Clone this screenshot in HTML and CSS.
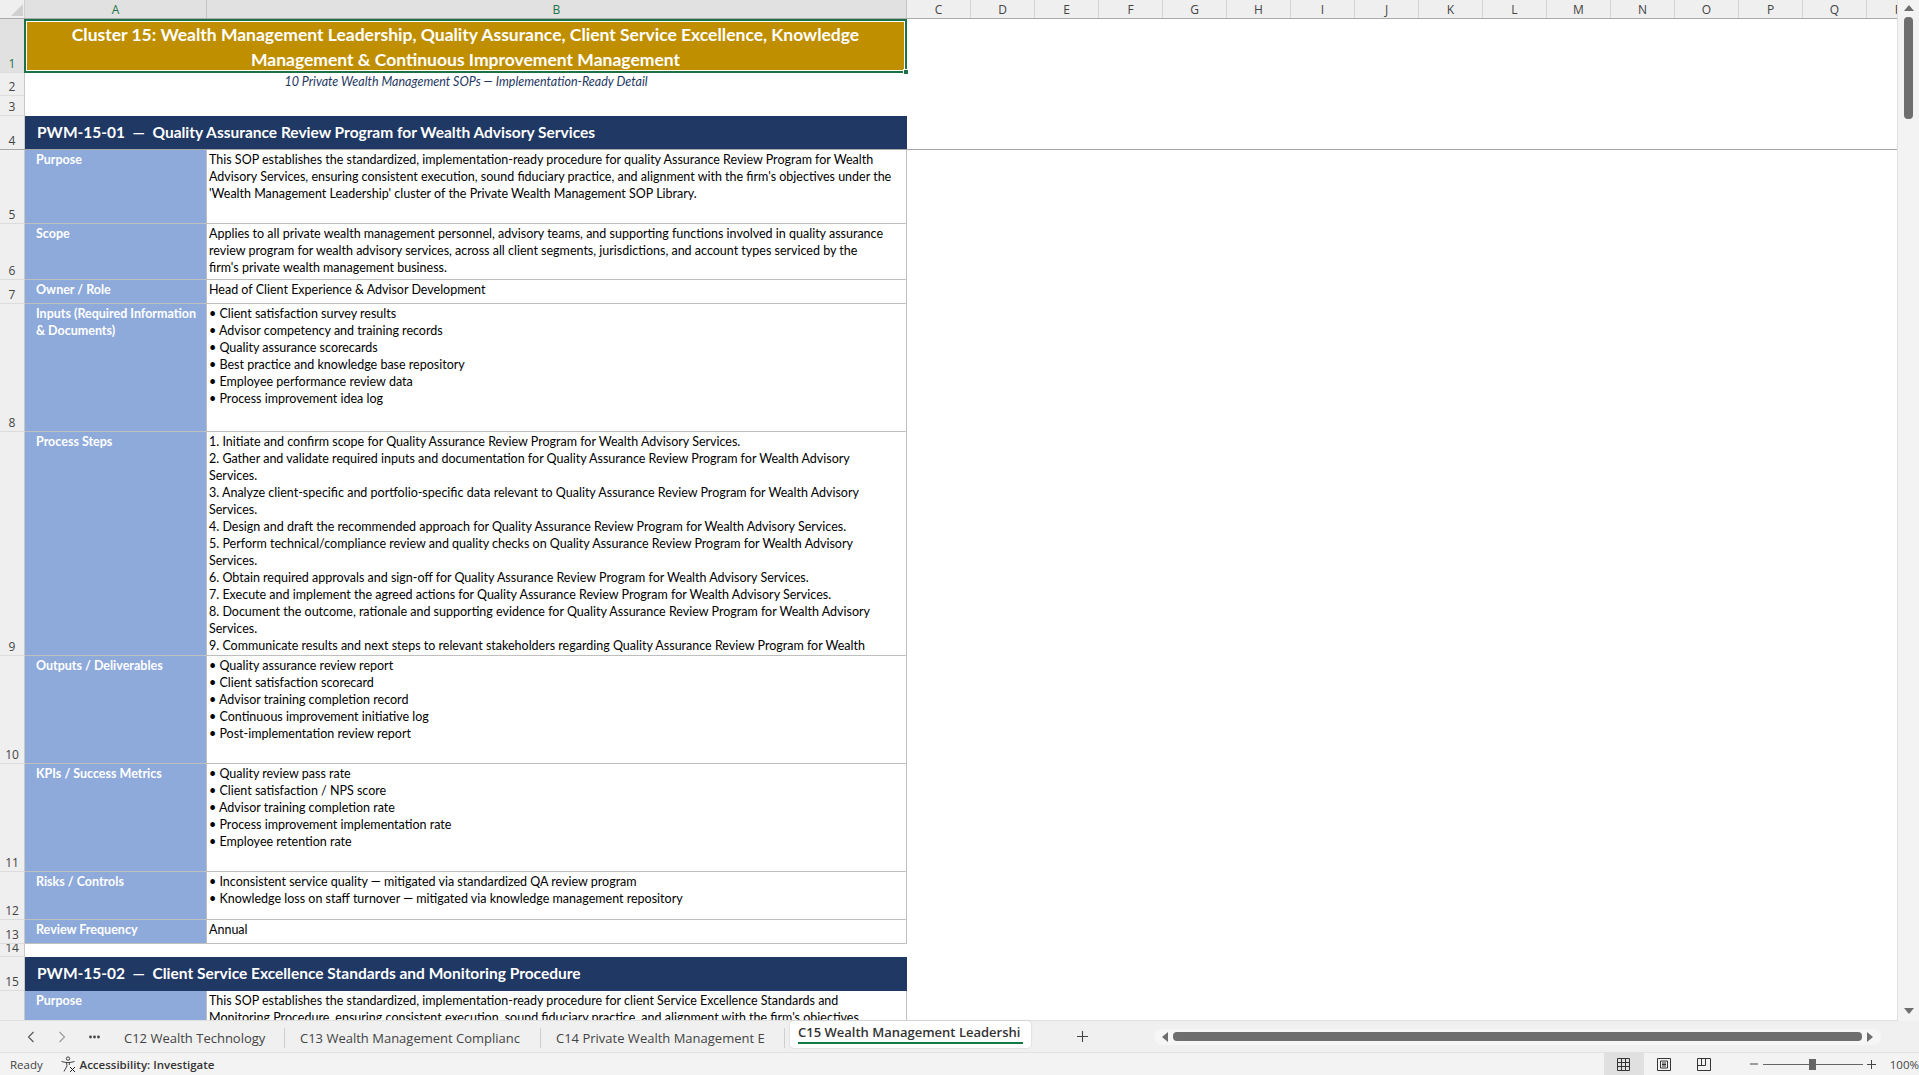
FILE: index.html
```html
<!DOCTYPE html>
<html lang="en">
<head>
  <meta charset="UTF-8">
  <title>C15 Wealth Management Leadership</title>
  <link rel="stylesheet" href="styles.css">
</head>
<body>
  <div class="app">
    <div class="main">
      <div class="sheet">
        <div class="colhead">
          <div class="corner"><svg width="14" height="14" viewBox="0 0 14 14"><polygon points="13,1 13,13 1,13" fill="#d0d0d0"/></svg></div>
          <div class="col col-a sel">A</div>
          <div class="col col-b sel">B</div>
          <div class="col">C</div><div class="col">D</div><div class="col">E</div><div class="col">F</div>
          <div class="col">G</div><div class="col">H</div><div class="col">I</div><div class="col">J</div>
          <div class="col">K</div><div class="col">L</div><div class="col">M</div><div class="col">N</div>
          <div class="col">O</div><div class="col">P</div><div class="col">Q</div><div class="col">R</div>
        </div>

        <div class="row r1">
          <div class="rh sel">1</div>
          <div class="title">Cluster 15: Wealth Management Leadership, Quality Assurance, Client Service Excellence, Knowledge<br>Management &amp; Continuous Improvement Management<span class="handle"></span></div>
        </div>
        <div class="row r2">
          <div class="rh">2</div>
          <div class="subtitle">10 Private Wealth Management SOPs — Implementation-Ready Detail</div>
        </div>
        <div class="row r3"><div class="rh">3</div></div>
        <div class="row r4 freeze">
          <div class="rh">4</div>
          <div class="section">PWM-15-01&nbsp; —&nbsp; Quality Assurance Review Program for Wealth Advisory Services</div>
        </div>

        <div class="row r5">
          <div class="rh">5</div>
          <div class="label">Purpose</div>
          <div class="text">This SOP establishes the standardized, implementation-ready procedure for quality Assurance Review Program for Wealth<br>Advisory Services, ensuring consistent execution, sound fiduciary practice, and alignment with the firm's objectives under the<br>'Wealth Management Leadership' cluster of the Private Wealth Management SOP Library.</div>
        </div>
        <div class="row r6">
          <div class="rh">6</div>
          <div class="label">Scope</div>
          <div class="text">Applies to all private wealth management personnel, advisory teams, and supporting functions involved in quality assurance<br>review program for wealth advisory services, across all client segments, jurisdictions, and account types serviced by the<br>firm's private wealth management business.</div>
        </div>
        <div class="row r7">
          <div class="rh">7</div>
          <div class="label">Owner / Role</div>
          <div class="text">Head of Client Experience &amp; Advisor Development</div>
        </div>
        <div class="row r8">
          <div class="rh">8</div>
          <div class="label">Inputs (Required Information<br>&amp; Documents)</div>
          <div class="text">• Client satisfaction survey results<br>• Advisor competency and training records<br>• Quality assurance scorecards<br>• Best practice and knowledge base repository<br>• Employee performance review data<br>• Process improvement idea log</div>
        </div>
        <div class="row r9">
          <div class="rh">9</div>
          <div class="label">Process Steps</div>
          <div class="text">1. Initiate and confirm scope for Quality Assurance Review Program for Wealth Advisory Services.<br>2. Gather and validate required inputs and documentation for Quality Assurance Review Program for Wealth Advisory<br>Services.<br>3. Analyze client-specific and portfolio-specific data relevant to Quality Assurance Review Program for Wealth Advisory<br>Services.<br>4. Design and draft the recommended approach for Quality Assurance Review Program for Wealth Advisory Services.<br>5. Perform technical/compliance review and quality checks on Quality Assurance Review Program for Wealth Advisory<br>Services.<br>6. Obtain required approvals and sign-off for Quality Assurance Review Program for Wealth Advisory Services.<br>7. Execute and implement the agreed actions for Quality Assurance Review Program for Wealth Advisory Services.<br>8. Document the outcome, rationale and supporting evidence for Quality Assurance Review Program for Wealth Advisory<br>Services.<br>9. Communicate results and next steps to relevant stakeholders regarding Quality Assurance Review Program for Wealth</div>
        </div>
        <div class="row r10">
          <div class="rh">10</div>
          <div class="label">Outputs / Deliverables</div>
          <div class="text">• Quality assurance review report<br>• Client satisfaction scorecard<br>• Advisor training completion record<br>• Continuous improvement initiative log<br>• Post-implementation review report</div>
        </div>
        <div class="row r11">
          <div class="rh">11</div>
          <div class="label">KPIs / Success Metrics</div>
          <div class="text">• Quality review pass rate<br>• Client satisfaction / NPS score<br>• Advisor training completion rate<br>• Process improvement implementation rate<br>• Employee retention rate</div>
        </div>
        <div class="row r12">
          <div class="rh">12</div>
          <div class="label">Risks / Controls</div>
          <div class="text">• Inconsistent service quality — mitigated via standardized QA review program<br>• Knowledge loss on staff turnover — mitigated via knowledge management repository</div>
        </div>
        <div class="row r13">
          <div class="rh">13</div>
          <div class="label">Review Frequency</div>
          <div class="text">Annual</div>
        </div>
        <div class="row r14"><div class="rh">14</div></div>
        <div class="row r15">
          <div class="rh">15</div>
          <div class="section">PWM-15-02&nbsp; —&nbsp; Client Service Excellence Standards and Monitoring Procedure</div>
        </div>
        <div class="row r16">
          <div class="rh"></div>
          <div class="label">Purpose</div>
          <div class="text">This SOP establishes the standardized, implementation-ready procedure for client Service Excellence Standards and<br>Monitoring Procedure, ensuring consistent execution, sound fiduciary practice, and alignment with the firm's objectives</div>
        </div>
      </div>

      <div class="vscroll">
        <svg class="varrow" width="10" height="6" viewBox="0 0 10 6"><polygon points="5,0 10,6 0,6" fill="#6e6e6e"/></svg>
        <div class="vthumb"></div>
        <svg class="varrow down" width="10" height="6" viewBox="0 0 10 6"><polygon points="0,0 10,0 5,6" fill="#6e6e6e"/></svg>
      </div>
    </div>

    <div class="tabbar">
      <div class="tabnav">
        <svg width="8" height="12" viewBox="0 0 8 12"><path d="M6.5 1 1.5 6l5 5" fill="none" stroke="#555" stroke-width="1.1"/></svg>
        <svg width="8" height="12" viewBox="0 0 8 12"><path d="M1.5 1l5 5-5 5" fill="none" stroke="#999" stroke-width="1.1"/></svg>
        <svg width="11" height="4" viewBox="0 0 11 4"><circle cx="1.5" cy="2" r="1.4" fill="#444"/><circle cx="5.5" cy="2" r="1.4" fill="#444"/><circle cx="9.5" cy="2" r="1.4" fill="#444"/></svg>
      </div>
      <div class="tab t12">C12 Wealth Technology</div>
      <div class="tab t13">C13 Wealth Management Complianc</div>
      <div class="tab t14">C14 Private Wealth Management E</div>
      <div class="tab active"><span>C15 Wealth Management Leadershi</span></div>
      <div class="addtab">
        <svg width="13" height="13" viewBox="0 0 13 13"><path d="M6.5 1v11M1 6.5h11" stroke="#444" stroke-width="1.1"/></svg>
      </div>
      <div class="tabdots">
        <svg width="3" height="12" viewBox="0 0 3 12"><circle cx="1.5" cy="1.5" r="1.2" fill="#444"/><circle cx="1.5" cy="6" r="1.2" fill="#444"/><circle cx="1.5" cy="10.5" r="1.2" fill="#444"/></svg>
      </div>
      <div class="hscroll">
        <svg width="6" height="10" viewBox="0 0 6 10"><polygon points="0,5 6,0 6,10" fill="#6e6e6e"/></svg>
        <div class="hthumb"></div>
        <svg width="6" height="10" viewBox="0 0 6 10"><polygon points="0,0 6,5 0,10" fill="#6e6e6e"/></svg>
      </div>
    </div>

    <div class="status">
      <div class="ready">Ready</div>
      <div class="access">
        <svg width="17" height="17" viewBox="0 0 17 17" fill="none" stroke="#444" stroke-width="1">
          <circle cx="8" cy="2.6" r="1.7"/>
          <path d="M1.5 5.5 6 6.5h4l4.5-1M6.5 6.5 7 10l-3 5.5M9.5 6.5 9.3 9"/>
          <path d="M10 11l5 5M15 11l-5 5" stroke="#222"/>
        </svg>
        <span>Accessibility: Investigate</span>
      </div>
      <div class="views">
        <div class="view on">
          <svg width="13" height="13" viewBox="0 0 13 13" fill="none" stroke="#333"><path d="M.5.5h12v12H.5zM.5 4.5h12M.5 8.5h12M4.5.5v12M8.5.5v12"/></svg>
        </div>
        <div class="view">
          <svg width="14" height="13" viewBox="0 0 14 13" fill="none" stroke="#333"><path d="M.5.5h13v12H.5zM3.5 3h7v7h-7zM5 5h4M5 6.500h4M5 8h4"/></svg>
        </div>
        <div class="view">
          <svg width="14" height="13" viewBox="0 0 14 13" fill="none" stroke="#333"><path d="M.5.500h13v12H.5zM.5 7.500h8v-7M4.500 .5v7"/></svg>
        </div>
      </div>
      <div class="zoom">
        <svg width="8" height="2" viewBox="0 0 8 2"><path d="M0 1h8" stroke="#444"/></svg>
        <div class="slider"><span class="knob"></span></div>
        <svg width="9" height="9" viewBox="0 0 9 9"><path d="M0 4.500h9M4.500 0v9" stroke="#444"/></svg>
        <div class="pct">100%</div>
      </div>
    </div>
  </div>
</body>
</html>
```
FILE: styles.css
```css
* {
  box-sizing: border-box;
}
body {
  margin: 0;
  overflow: hidden;
  background: #fff;
  font-family: Lato, "Open Sans", sans-serif;
  color: #000;
}
.app {
  width: 1919px;
  height: 1075px;
  display: flex;
  flex-direction: column;
}
.main {
  height: 1021px;
  display: flex;
  overflow: hidden;
}
.sheet {
  width: 1898px;
  overflow: hidden;
  border-right: 1px solid #e0e0e0;
  border-bottom: 1px solid #e0e0e0;
}

/* column letters */
.colhead {
  display: flex;
  height: 19px;
  background: #efefef;
  border-bottom: 1px solid #ababab;
  overflow: hidden;
}
.corner {
  flex: none;
  width: 25px;
  padding: 3px 0 0 10px;
  background: #efefef;
  border-right: 1px solid #d0d0d0;
}
.corner svg {
  display: block;
}
.col {
  flex: none;
  width: 64px;
  font-family: "Open Sans", sans-serif;
  font-size: 12px;
  line-height: 20px;
  text-align: center;
  color: #444;
  border-right: 1px solid #d4d4d4;
}
.col-a {
  width: 182px;
}
.col-b {
  width: 700px;
}
.col.sel {
  background: #e1e1e1;
  color: #217346;
  border-right-color: #c4c4c4;
}

/* rows */
.row {
  display: flex;
  position: relative;
}
.rh {
  flex: none;
  width: 25px;
  display: flex;
  align-items: flex-end;
  justify-content: center;
  font-family: "Open Sans", sans-serif;
  font-size: 12px;
  line-height: 16px;
  color: #444;
  background: #efefef;
  border-right: 1px solid #c8c8c8;
  border-bottom: 1px solid #dcdcdc;
  overflow: hidden;
}
.rh.sel {
  background: #e1e1e1;
  color: #217346;
}
.r1 { height: 54px; }
.r2 { height: 23px; }
.r3 { height: 20px; }
.r4 { height: 34px; }
.r5 { height: 74px; }
.r6 { height: 56px; }
.r7 { height: 24px; }
.r8 { height: 128px; }
.r9 { height: 224px; }
.r10 { height: 108px; }
.r11 { height: 108px; }
.r12 { height: 48px; }
.r13 { height: 24px; }
.r14 { height: 13px; }
.r15 { height: 34px; }
.r16 { height: 60px; }
.freeze {
  border-bottom: 1px solid #a6a6a6;
}
.freeze .rh {
  border-bottom: 0;
}

.title {
  position: relative;
  width: 883px;
  margin-left: -1px;
  background: #bf8f00;
  color: #fff;
  font-weight: 700;
  font-size: 17.5px;
  line-height: 25px;
  text-align: center;
  padding-top: 1px;
  white-space: nowrap;
  border: 2px solid #1e7145;
  outline: 1px solid #fff;
  outline-offset: -3px;
}
.handle {
  position: absolute;
  right: -4px;
  bottom: -4px;
  width: 6px;
  height: 6px;
  background: #1e7145;
  border: 1px solid #fff;
}
.subtitle {
  width: 882px;
  font-size: 12.5px;
  font-style: italic;
  line-height: 17px;
  text-align: center;
  color: #1f3864;
  white-space: nowrap;
}
.section {
  width: 882px;
  background: #1f3864;
  color: #fff;
  font-weight: 700;
  font-size: 15.5px;
  line-height: 33px;
  padding-left: 12px;
  white-space: nowrap;
}
.label {
  flex: none;
  width: 182px;
  background: #8eaadb;
  color: #fff;
  font-weight: 700;
  font-size: 12.5px;
  line-height: 17px;
  padding: 1px 0 0 11px;
  border-bottom: 1px solid #bfbfbf;
  border-right: 1px solid #bfbfbf;
  white-space: nowrap;
  overflow: hidden;
}
.text {
  flex: none;
  width: 700px;
  font-size: 12.5px;
  line-height: 17px;
  padding: 1px 0 0 2px;
  border-bottom: 1px solid #bfbfbf;
  border-right: 1px solid #bfbfbf;
  white-space: nowrap;
  overflow: hidden;
}

/* vertical scrollbar */
.vscroll {
  flex: none;
  width: 21px;
  background: #f3f3f3;
  display: flex;
  flex-direction: column;
  align-items: center;
  padding: 5px 0;
}
.varrow {
  flex: none;
}
.varrow.down {
  margin-top: auto;
  margin-bottom: 2px;
}
.vthumb {
  width: 9px;
  height: 102px;
  margin-top: 6px;
  background: #6e6e6e;
  border-radius: 4px;
}

/* sheet tabs */
.tabbar {
  height: 32px;
  display: flex;
  align-items: center;
  background: #f0f0f0;
  font-family: "Open Sans", sans-serif;
  font-size: 13px;
  color: #444;
  border-bottom: 1px solid #e2e2e2;
}
.tabnav {
  flex: none;
  width: 109px;
  display: flex;
  align-items: center;
  gap: 23px;
  padding-left: 27px;
}
.tab {
  flex: none;
  height: 20px;
  margin-top: 3px;
  line-height: 20px;
  padding: 0 15px;
  border-right: 1px solid #cfcfcf;
  white-space: nowrap;
  overflow: hidden;
}
.t12 { width: 176px; }
.t13 { width: 256px; }
.t14 { width: 244px; }
.tab.active {
  width: 241px;
  height: 27px;
  margin: 0 0 4px 5px;
  padding: 0 8px;
  background: #fff;
  color: #333;
  font-weight: 600;
  border: 0;
  border-radius: 4px;
  box-shadow: 0 0 2px rgba(0, 0, 0, 0.2);
}
.tab.active span {
  display: block;
  height: 23px;
  line-height: 23px;
  overflow: hidden;
  border-bottom: 2px solid #107c41;
}
.addtab {
  flex: none;
  width: 103px;
  padding-left: 45px;
  display: flex;
}
.tabdots {
  flex: none;
  width: 17px;
  padding-left: 20px;
  display: flex;
}
.hscroll {
  flex: none;
  width: 727px;
  height: 16px;
  margin-left: 0;
  padding: 0 8px;
  display: flex;
  align-items: center;
  gap: 5px;
  border-radius: 8px;
  background: #f6f6f6;
}
.hthumb {
  flex: 1;
  height: 9px;
  background: #6e6e6e;
  border-radius: 4px;
}

/* status bar */
.status {
  height: 22px;
  display: flex;
  align-items: center;
  background: #f3f3f3;
  font-family: "Open Sans", sans-serif;
  font-size: 11.5px;
  color: #444;
}
.ready {
  width: 60px;
  padding-left: 10px;
}
.access {
  width: 1559px;
  display: flex;
  align-items: center;
  gap: 3px;
  font-weight: 600;
  color: #333;
}
.views {
  display: flex;
  height: 22px;
}
.view {
  width: 40px;
  display: flex;
  align-items: center;
  justify-content: center;
}
.view.on {
  background: #e0e0e0;
}
.zoom {
  display: flex;
  align-items: center;
  padding-left: 26px;
}
.slider {
  position: relative;
  width: 100px;
  height: 1px;
  margin: 0 4px 0 5px;
  background: #666;
}
.knob {
  position: absolute;
  left: 46px;
  top: -5px;
  width: 7px;
  height: 11px;
  background: #666;
}
.pct {
  margin-left: 14px;
}
```
